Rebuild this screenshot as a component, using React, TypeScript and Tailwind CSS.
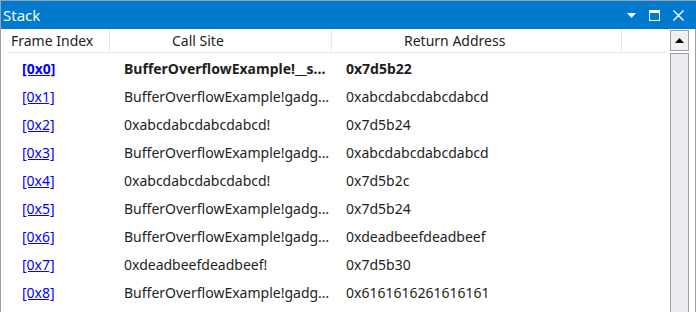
import { useState } from 'react';

interface Frame { index: string; site: string; ret: string; current?: boolean; }

const FRAMES: Frame[] = [
    { index: '[0x0]', site: 'BufferOverflowExample!__s…', ret: '0x7d5b22', current: true },
    { index: '[0x1]', site: 'BufferOverflowExample!gadg…', ret: '0xabcdabcdabcdabcd' },
    { index: '[0x2]', site: '0xabcdabcdabcdabcd!', ret: '0x7d5b24' },
    { index: '[0x3]', site: 'BufferOverflowExample!gadg…', ret: '0xabcdabcdabcdabcd' },
    { index: '[0x4]', site: '0xabcdabcdabcdabcd!', ret: '0x7d5b2c' },
    { index: '[0x5]', site: 'BufferOverflowExample!gadg…', ret: '0x7d5b24' },
    { index: '[0x6]', site: 'BufferOverflowExample!gadg…', ret: '0xdeadbeefdeadbeef' },
    { index: '[0x7]', site: '0xdeadbeefdeadbeef!', ret: '0x7d5b30' },
    { index: '[0x8]', site: 'BufferOverflowExample!gadg…', ret: '0x6161616261616161' },
];

export default function App() {
    const [selected] = useState(0);

    return (
        <div className="w-[696px] h-[312px] bg-white border-l border-t border-[#a0a0a0] overflow-hidden flex flex-col text-[#1e1e1e] text-[14px] font-['Noto_Sans',sans-serif]">

            {/* Title bar */}
            <div className="h-[28px] shrink-0 bg-[#007acc] text-white flex items-center pl-[2px]">
                <span className="text-[15px] leading-none">Stack</span>
                <div className="ml-auto flex items-center">
                    <svg className="w-[9px] h-[5px] mr-[13px]" viewBox="0 0 9 5"><path d="M0 0h9L4.5 5z" fill="#fff"/></svg>
                    <svg className="w-[11px] h-[11px] mr-[13px]" viewBox="0 0 11 11" fill="none" stroke="#fff">
                        <rect x="0.5" y="0.5" width="10" height="10"/>
                        <rect x="0.5" y="1" width="10" height="2" fill="#fff" strokeWidth={0}/>
                    </svg>
                    <svg className="w-[11px] h-[11px] mr-[12px]" viewBox="0 0 11 11" stroke="#fff" strokeWidth={1.4}>
                        <path d="M0.5 0.5l10 10M10.5 0.5l-10 10"/>
                    </svg>
                </div>
            </div>

            {/* Body */}
            <div className="flex flex-1 min-h-0">
                <div className="flex-1 pl-[7px] pr-[4px]">
                    {/* Header */}
                    <div className="flex h-[24px] border-b border-[#e8e8e8] items-center">
                        <div className="w-[102px] h-full pl-[3px] flex items-center border-r border-[#e8e8e8]">Frame Index</div>
                        <div className="w-[222px] h-full pl-[62px] flex items-center border-r border-[#e8e8e8]">Call Site</div>
                        <div className="w-[290px] h-full pl-[72px] flex items-center border-r border-[#e8e8e8]">Return Address</div>
                        <div className="flex-1" />
                    </div>

                    {/* Rows */}
                    <div className="pt-[1px]">
                        {FRAMES.map((f, i) => (
                            <div key={f.index} className={`flex h-[28px] items-center ${i === selected ? 'font-bold' : ''}`}>
                                <div className="w-[102px] pl-[14px]">
                                    <span className="text-[#0000ff] underline">{f.index}</span>
                                </div>
                                <div className="w-[222px] pl-[14px] whitespace-nowrap overflow-hidden">{f.site}</div>
                                <div className="w-[290px] pl-[14px] whitespace-nowrap">{f.ret}</div>
                            </div>
                        ))}
                    </div>
                </div>

                {/* Scrollbar */}
                <div className="w-[19px] shrink-0 flex flex-col pt-[1px] gap-[2px]">
                    <div className="h-[21px] border border-[#a0a0a0] bg-[#f0f0f0] flex items-center justify-center">
                        <svg className="w-[9px] h-[5px]" viewBox="0 0 9 5"><path d="M4.5 0L9 5H0z" fill="#000"/></svg>
                    </div>
                    <div className="flex-1 border border-b-0 border-[#a0a0a0] bg-[#ebebf0]" />
                </div>
                <div className="w-[7px] shrink-0 border-r border-[#a0a0a0]" />
            </div>
        </div>
    );
}
